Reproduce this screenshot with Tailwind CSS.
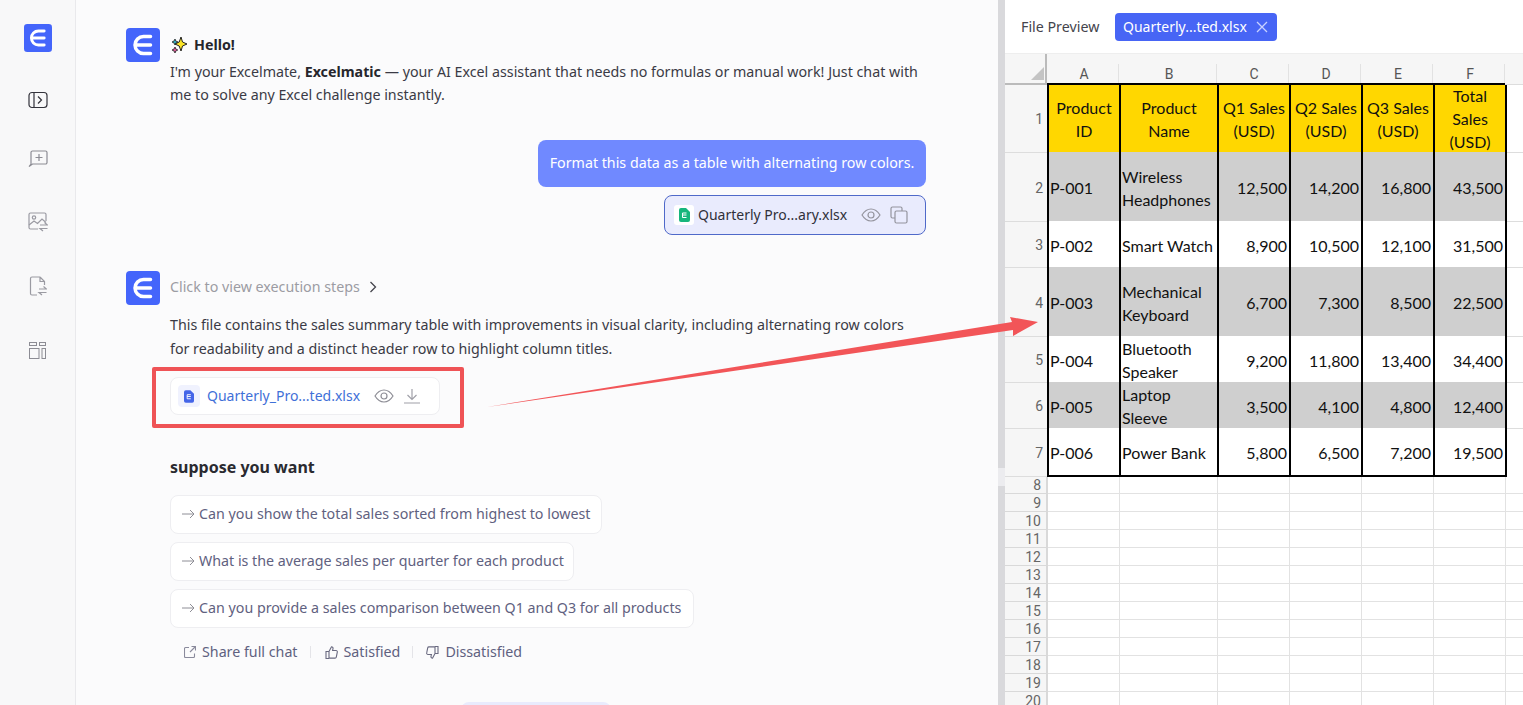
<!DOCTYPE html>
<html lang="en">
<head>
    <meta charset="UTF-8">
    <title>Excelmate</title>
    <script src="https://cdn.jsdelivr.net/npm/@tailwindcss/browser@4"></script>
</head>
<body class="font-['Noto_Sans','Open_Sans',sans-serif] text-[14.25px] text-[#3a3a45]">
<div class="relative flex h-[705px] w-[1523px] overflow-hidden bg-[#fbfbfc]">

    <!-- sidebar -->
    <div class="flex w-[76px] shrink-0 flex-col items-center border-r border-[#e9e9ec] bg-[#f8f8f9] pt-[24px]">
        <svg width="28" height="28" viewBox="0 0 34 34"><rect width="34" height="34" rx="4" fill="#4465fb"/><path d="M24.500 8.500h-7a8.500 8.500 0 0 0 0 17h7M11 17h13.500" fill="none" stroke="#fff" stroke-width="3.500" stroke-linecap="round"/></svg>
        <svg class="mt-[39px]" width="20" height="18" viewBox="0 0 20 18" fill="none" stroke="#33333b" stroke-width="1.200"><rect x="1" y="1.500" width="18" height="15" rx="3"/><path d="M6 1.500v15M10 5.500l3.500 3.500L10 12.500"/></svg>
        <svg class="mt-[41px]" width="20" height="18" viewBox="0 0 20 18" fill="none" stroke="#8c8c94" stroke-width="1.200"><path d="M4.500 1h13a1.500 1.500 0 0 1 1.500 1.500v10a1.500 1.500 0 0 1-1.500 1.500H4.500L1 16.500l2-2.500V2.500A1.500 1.500 0 0 1 4.500 1z"/><path d="M11 4v7M7.500 7.500h7"/></svg>
        <svg class="mt-[44px]" width="20" height="20" viewBox="0 0 20 20" fill="none" stroke="#9a9aa2" stroke-width="1.200"><path d="M18 9V2.500A1.500 1.500 0 0 0 16.500 1h-14A1.500 1.500 0 0 0 1 2.500v13A1.500 1.500 0 0 0 2.500 17H10"/><circle cx="6" cy="5.500" r="1.700"/><path d="M1 13l5-4 3.500 2.500L14 7l4 3.500"/><path d="M12 13h7.500l-3-2.500M19.500 16.500H12l3 2.500"/></svg>
        <svg class="mt-[44px]" width="18" height="20" viewBox="0 0 18 20" fill="none" stroke="#9a9aa2" stroke-width="1.200"><path d="M11 1H3a1.500 1.500 0 0 0-1.500 1.500v15A1.500 1.500 0 0 0 3 19h5M11 1l4.500 4.500V9M11 1v4.500h4.500"/><path d="M10 13h7.500l-3-2.500M17.500 16.500H10l3 2.500"/></svg>
        <svg class="mt-[46px]" width="17" height="17" viewBox="0 0 17 17" fill="none" stroke="#8c8c94" stroke-width="1"><rect x="0.500" y="0.500" width="7" height="3"/><rect x="10.500" y="0.500" width="6" height="3"/><rect x="0.500" y="6.500" width="9.500" height="10"/><rect x="13" y="6.500" width="3.500" height="10"/></svg>
    </div>

    <!-- chat -->
    <div class="w-[922px] shrink-0 pl-[50px] pt-[28px]">
        <div class="w-[800px]">
            <div class="flex gap-[10px]">
                <svg class="shrink-0" width="34" height="34" viewBox="0 0 34 34"><rect width="34" height="34" rx="4" fill="#4465fb"/><path d="M24.500 8.500h-7a8.500 8.500 0 0 0 0 17h7M11 17h13.500" fill="none" stroke="#fff" stroke-width="3.500" stroke-linecap="round"/></svg>
                <div class="pt-[5px] leading-[23px]">
                    <div class="mb-[4px] flex items-center gap-[6px] font-bold text-[#26262c]">
                        <svg width="18" height="18" viewBox="0 0 18 18"><path d="M11 1l1.500 5L17 8l-4.500 2L11 15l-1.800-5L5 8l4.200-2z" fill="#fbe426" stroke="#222" stroke-width="1"/><path d="M5 3l.8 2L8 6 5.800 7 5 9 4 7 2 6l2-1z" fill="#35a9b8" stroke="#222" stroke-width=".8"/><path d="M5 11l.8 2 2 1-2 1L5 17l-1-2-2-1 2-1z" fill="#d85a98" stroke="#222" stroke-width=".8"/></svg>
                        Hello!
                    </div>
                    <p class="w-[756px]">I'm your Excelmate, <b class="text-[#26262c]">Excelmatic</b> — your AI Excel assistant that needs no formulas or manual work! Just chat with me to solve any Excel challenge instantly.</p>
                </div>
            </div>

            <div class="mt-[34px] flex flex-col items-end">
                <div class="flex h-[47px] w-[388px] items-center justify-center rounded-[8px] bg-[#7089ff] pb-[2px] text-white">Format this data as a table with alternating row colors.</div>
                <div class="mt-[8px] flex h-[40px] w-[262px] items-center rounded-[8px] border border-[#4f69c9] bg-[#e9ebfd] pl-[9px]">
                    <span class="flex h-[20px] w-[20px] items-center justify-center rounded-[3px] bg-white">
                        <svg width="11" height="14" viewBox="0 0 11 14"><path d="M2 0h5l4 4v8a2 2 0 0 1-2 2H2a2 2 0 0 1-2-2V2a2 2 0 0 1 2-2z" fill="#17b67c"/><path d="M3.500 5h4M3.500 7h4M3.500 9.500h4M3.500 5v4.500" stroke="#fff" stroke-width="1" fill="none"/></svg>
                    </span>
                    <span class="ml-[4px] w-[148px] pb-[2px] text-[14px] whitespace-nowrap text-[#30303a]">Quarterly Pro...ary.xlsx</span>
                    <svg class="ml-[15px]" width="20" height="14" viewBox="0 0 20 14" fill="none" stroke="#94949e" stroke-width="1.200"><path d="M1 7c2.500-4 5.500-6 9-6s6.500 2 9 6c-2.500 4-5.500 6-9 6s-6.500-2-9-6z"/><circle cx="10" cy="7" r="3"/></svg>
                    <svg class="ml-[9px]" width="18" height="18" viewBox="0 0 18 18" fill="none" stroke="#94949e" stroke-width="1.200"><path d="M12 5V2.500A1.500 1.500 0 0 0 10.500 1h-8A1.500 1.500 0 0 0 1 2.500v8A1.500 1.500 0 0 0 2.500 12H5"/><rect x="5" y="5" width="12" height="12" rx="1.500"/></svg>
                </div>
            </div>

            <div class="mt-[36px] flex gap-[10px]">
                <svg class="shrink-0" width="34" height="34" viewBox="0 0 34 34"><rect width="34" height="34" rx="4" fill="#4465fb"/><path d="M24.500 8.500h-7a8.500 8.500 0 0 0 0 17h7M11 17h13.500" fill="none" stroke="#fff" stroke-width="3.500" stroke-linecap="round"/></svg>
                <div>
                    <div class="flex h-[32px] items-center text-[#9c9ca3]">
                        Click to view execution steps
                        <svg class="ml-[9px]" width="8" height="12" viewBox="0 0 8 12" fill="none" stroke="#44444c" stroke-width="1.300"><path d="M1.500 1l5 5-5 5"/></svg>
                    </div>
                    <p class="mt-[10px] w-[756px] leading-[24px]">This file contains the sales summary table with improvements in visual clarity, including alternating row colors for readability and a distinct header row to highlight column titles.</p>
                    <div class="mt-[16px] flex h-[38px] w-[270px] items-center rounded-[8px] border border-[#eeeef1] bg-white pl-[7px]">
                        <span class="flex h-[22px] w-[22px] items-center justify-center rounded-[4px] bg-[#f0f2fe]">
                            <svg width="10" height="13" viewBox="0 0 11 14"><path d="M2 0h5l4 4v8a2 2 0 0 1-2 2H2a2 2 0 0 1-2-2V2a2 2 0 0 1 2-2z" fill="#4465e8"/><path d="M3.500 5h4M3.500 7h4M3.500 9.500h4M3.500 5v4.500" stroke="#fff" stroke-width="1" fill="none"/></svg>
                        </span>
                        <span class="ml-[7px] w-[152px] pb-[2px] text-[14px] whitespace-nowrap text-[#3f70d8]">Quarterly_Pro...ted.xlsx</span>
                        <svg class="ml-[15px]" width="20" height="14" viewBox="0 0 20 14" fill="none" stroke="#8e8e96" stroke-width="1.200"><path d="M1 7c2.500-4 5.500-6 9-6s6.500 2 9 6c-2.500 4-5.500 6-9 6s-6.500-2-9-6z"/><circle cx="10" cy="7" r="3"/></svg>
                        <svg class="ml-[10px]" width="16" height="16" viewBox="0 0 16 16" fill="none" stroke="#a0a0a8" stroke-width="1.200"><path d="M8 1v10M3.500 7L8 11.500 12.500 7M0 15h16"/></svg>
                    </div>
                    <div class="mt-[40px] text-[16px] leading-[24px] font-bold text-[#2a2a30]">suppose you want</div>
                    <div class="mt-[16px] flex flex-col items-start gap-[8px] text-[#5f6180]">
                        <div class="flex h-[39px] w-[432px] items-center rounded-[8px] border border-[#eeeef1] bg-white pb-[2px] pl-[11px]"><svg class="mr-[4px]" width="13" height="10" viewBox="0 0 13 10" fill="none" stroke="#8e8e96"><path d="M0 5h12M8 1l4 4-4 4"/></svg>Can you show the total sales sorted from highest to lowest</div>
                        <div class="flex h-[39px] w-[404px] items-center rounded-[8px] border border-[#eeeef1] bg-white pb-[2px] pl-[11px]"><svg class="mr-[4px]" width="13" height="10" viewBox="0 0 13 10" fill="none" stroke="#8e8e96"><path d="M0 5h12M8 1l4 4-4 4"/></svg>What is the average sales per quarter for each product</div>
                        <div class="flex h-[39px] w-[524px] items-center rounded-[8px] border border-[#eeeef1] bg-white pb-[2px] pl-[11px]"><svg class="mr-[4px]" width="13" height="10" viewBox="0 0 13 10" fill="none" stroke="#8e8e96"><path d="M0 5h12M8 1l4 4-4 4"/></svg>Can you provide a sales comparison between Q1 and Q3 for all products</div>
                    </div>
                    <div class="mt-[13px] flex h-[22px] items-center pl-[14px] text-[#5f6180]">
                        <svg class="mr-[6px]" width="12" height="12" viewBox="0 0 12 12" fill="none" stroke="#8a8a9c" stroke-width="1.100"><path d="M5 1.500H1.500a1 1 0 0 0-1 1v8a1 1 0 0 0 1 1h8a1 1 0 0 0 1-1V7.500M7.500.5h4v4M11.500.5L6 6"/></svg>
                        Share full chat
                        <span class="ml-[12px] mr-[14px] h-[12px] w-px bg-[#e4e4e8]"></span>
                        <svg class="mr-[6px]" width="13" height="13" viewBox="0 0 13 13" fill="none" stroke="#6a6a80" stroke-width="1.100"><path d="M4 5.500L6.500.8c1 0 1.700.8 1.500 1.800L7.600 4.500h3.400a1.300 1.300 0 0 1 1.300 1.600l-1 5a1.300 1.300 0 0 1-1.300 1H4zM4 5.500H1v7h3"/></svg>
                        Satisfied
                        <span class="ml-[12px] mr-[13px] h-[12px] w-px bg-[#e4e4e8]"></span>
                        <svg class="mr-[6px]" width="13" height="13" viewBox="0 0 13 13" fill="none" stroke="#6a6a80" stroke-width="1.100"><path d="M9 7.500L6.500 12.200c-1 0-1.700-.8-1.500-1.800l.4-1.900H2a1.300 1.300 0 0 1-1.300-1.600l1-5a1.300 1.300 0 0 1 1.300-1h6zM9 7.500h3v-7H9"/></svg>
                        Dissatisfied
                    </div>
                </div>
            </div>
            <div class="ml-[335px] mt-[39px] h-[20px] w-[150px] rounded-t-[8px] bg-[#e9ebfd]"></div>
        </div>
    </div>

    <!-- splitter -->
    <div class="flex w-[7px] shrink-0 flex-col bg-[#d9d9dc] pt-[468px]">
        <div class="h-[18px] bg-[#ececef]"></div>
    </div>

    <!-- file preview -->
    <div class="min-w-0 flex-1 bg-white">
        <div class="flex h-[54px] items-center border-b border-[#eeeeee] pl-[16px]">
            <span class="w-[78px] whitespace-nowrap text-[#44444c]">File Preview</span>
            <span class="ml-[16px] flex h-[28px] w-[162px] items-center rounded-[4px] bg-[#4765f5] pl-[8px] text-[14px] whitespace-nowrap text-white">
                Quarterly...ted.xlsx
                <svg class="ml-[8px]" width="14" height="14" viewBox="0 0 14 14" stroke="#c8d2ff" stroke-width="1.300"><path d="M2 2l10 10M12 2L2 12"/></svg>
            </span>
        </div>
        <div id="sheet" class="font-['Lato','Noto_Sans',sans-serif] text-[16px] leading-[23px] text-[#111]"></div>
    </div>

    <!-- annotation over the page -->
    <div class="absolute left-[152px] top-[367px] h-[61px] w-[312px] rounded-[2px] border-[4px] border-[#ef5356]"></div>
    <svg class="absolute left-0 top-0" width="1523" height="705" viewBox="0 0 1523 705"><polygon points="487,407 1012,322 1010,317 1038,322 1013,336 1013,330" fill="#f25558"/></svg>
</div>

<script>
    // spreadsheet rows
    const cols = ["A", "B", "C", "D", "E", "F"];
    const rows = [
        ["P-001", "Wireless<br>Headphones", "12,500", "14,200", "16,800", "43,500"],
        ["P-002", "Smart Watch", "8,900", "10,500", "12,100", "31,500"],
        ["P-003", "Mechanical<br>Keyboard", "6,700", "7,300", "8,500", "22,500"],
        ["P-004", "Bluetooth<br>Speaker", "9,200", "11,800", "13,400", "34,400"],
        ["P-005", "Laptop<br>Sleeve", "3,500", "4,100", "4,800", "12,400"],
        ["P-006", "Power Bank", "5,800", "6,500", "7,200", "19,500"]
    ];
    const heads = ["Product<br>ID", "Product<br>Name", "Q1 Sales<br>(USD)", "Q2 Sales<br>(USD)", "Q3 Sales<br>(USD)", "Total<br>Sales<br>(USD)"];
    const heights = [69, 46, 69, 46, 46, 49];
    const widths = ["w-[72px]", "w-[98px]", "w-[72px]", "w-[72px]", "w-[72px]", "w-[72px]"];
    const dataWidths = ["w-[72px]", "w-[98px]", "w-[72px]", "w-[72px]", "w-[72px]", "w-[74px]"];

    const rowNum = (n, h, line) => `<div class="flex w-[42px] shrink-0 items-center justify-end ${line} border-[#dddddd] bg-[#f6f6f6] pt-[2px] pr-[4px] font-['Roboto',sans-serif] text-[14px] text-[#666]" style="height:${h}px">${n}</div>`;

    let html = `<div class="flex h-[31px]">
        <div class="flex h-[31px] w-[42px] shrink-0 items-end justify-end border-r-2 border-b-2 border-[#bbbbbb] bg-[#f6f6f6] pr-[1px] pb-[3px]"><svg width="13" height="13"><polygon points="13,0 13,13 0,13" fill="#c4c4c4"/></svg></div>`;
    cols.forEach((c, i) => {
        html += `<div class="${widths[i]} relative flex h-[31px] items-end justify-center border-b-2 border-black bg-[#f6f6f6] pl-[2px] font-['Roboto',sans-serif] text-[14px] leading-[17px] text-[#555]">${c}<span class="absolute right-0 bottom-0 h-[19px] w-px bg-[#e2e2e2]"></span></div>`;
    });
    html += `<div class="h-[31px] flex-1 border-b border-[#dddddd] bg-[#f6f6f6]"></div></div>`;

    html += `<div class="flex">${rowNum(1, 67, "")}`;
    heads.forEach((t, i) => {
        html += `<div class="${dataWidths[i]} flex h-[67px] items-center justify-center border-l-2 border-black bg-[#ffd700] text-center ${i == 5 ? "border-r-2" : ""}"><span>${t}</span></div>`;
    });
    html += `<div class="flex-1"></div></div>`;

    rows.forEach((r, n) => {
        const bg = n % 2 == 0 ? "bg-[#cfcfcf]" : "bg-white";
        const last = n == 5 ? "border-b-2 border-b-black" : "";
        html += `<div class="flex">${rowNum(n + 2, heights[n], n == 5 ? "border-t border-b" : "border-t")}`;
        r.forEach((t, i) => {
            html += `<div class="${dataWidths[i]} ${bg} ${last} ${i < 2 ? "justify-start pl-[1px]" : "justify-end pr-[2px]"} ${i == 5 ? "border-r-2" : ""} flex items-center border-l-2 border-l-black border-r-black pt-[2px] whitespace-nowrap" style="height:${heights[n]}px"><span>${t}</span></div>`;
        });
        html += `<div class="flex-1 border-t border-[#dddddd]"></div></div>`;
    });

    for (let n = 8; n <= 20; n++) {
        // row 8 sits right under the table's bottom border
        html += `<div class="flex ${n == 8 ? "h-[17px]" : "h-[18px]"}">
            <div class="flex w-[43px] shrink-0 items-center justify-end border-r-2 border-b border-[#d9d9d9] bg-[#f6f6f6] pr-[5px] font-['Roboto',sans-serif] text-[14px] leading-[18px] text-[#666]">${n}</div>`;
        widths.forEach(w => { html += `<div class="${w} border-r border-b border-[#e2e2e2]"></div>`; });
        html += `<div class="flex-1 border-b border-[#e2e2e2]"></div></div>`;
    }
    document.getElementById("sheet").innerHTML = html;
</script>
</body>
</html>
